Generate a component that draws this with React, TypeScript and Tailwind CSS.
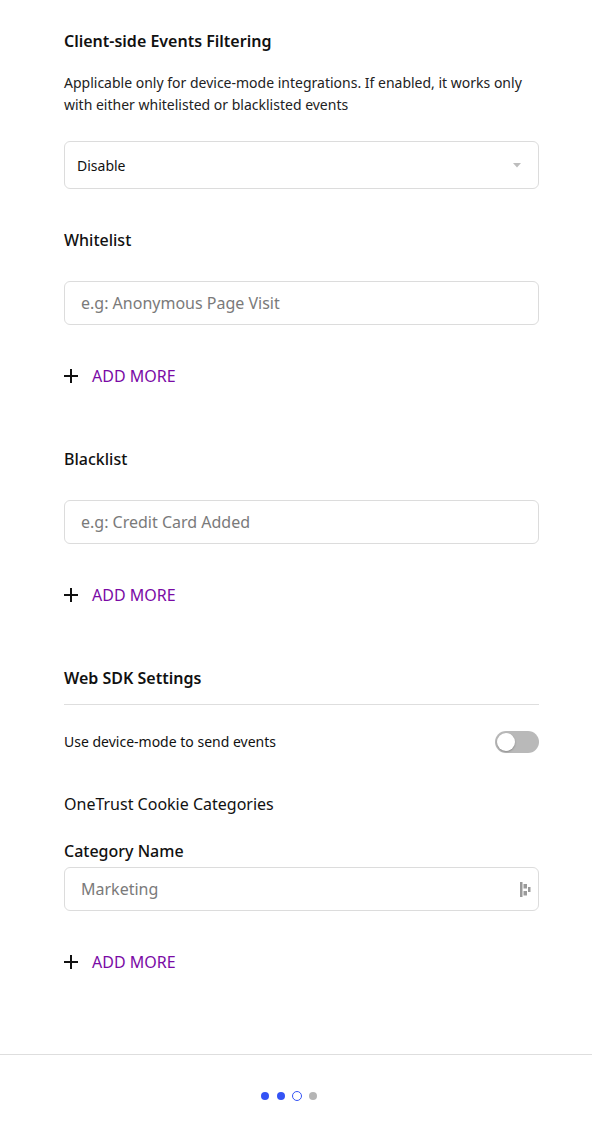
const purple = "text-[#7a0aa5]";

function AddMore({ className = "" }: { className?: string }) {
  return (
    <button className={`flex h-6 items-center gap-[14px] ${className}`}>
      <svg width="14" height="14" viewBox="0 0 14 14" className="text-[#111]">
        <path d="M7 0 V14 M0 7 H14" stroke="currentColor" strokeWidth="2" />
      </svg>
      <span className={`text-base leading-6 ${purple}`}>ADD MORE</span>
    </button>
  );
}

function TextInput({ placeholder, icon = false }: { placeholder: string; icon?: boolean }) {
  return (
    <div className="flex h-11 items-center rounded-md border border-[#dcdcdc] bg-white pl-4 pr-[7px]">
      <span className="flex-1 text-base text-[#7a7a7a]">{placeholder}</span>
      {icon && (
        <svg width="11" height="15" viewBox="0 0 11 15" className="text-[#9a9a9a]" fill="currentColor">
          <rect x="0" y="0" width="2.5" height="15" />
          <rect x="3.5" y="2" width="3.5" height="4.5" />
          <rect x="3.5" y="9" width="3.5" height="4.5" />
          <rect x="8" y="5" width="2.5" height="5" />
        </svg>
      )}
    </div>
  );
}

export default function App() {
  return (
    <div className="min-h-[1125px] bg-white font-['Noto_Sans',sans-serif] text-[#111]">
      <div className="pl-16 pr-[53px] pt-[29px]">
        <h2 className="text-base font-semibold leading-6">Client-side Events Filtering</h2>
        <p className="mt-[19px] text-sm leading-[22px] text-[#222]">
          Applicable only for device-mode integrations. If enabled, it works only with either whitelisted or
          blacklisted events
        </p>
        <div className="mt-[25px] flex h-12 items-center justify-between rounded-md border border-[#dcdcdc] pl-3 pr-[17px] pt-[2px]">
          <span className="text-sm">Disable</span>
          <svg width="8" height="5" viewBox="0 0 8 5" className="-mt-[2px]">
            <path d="M0 0 L8 0 L4 4.5 Z" fill="#bdbdbd" />
          </svg>
        </div>

        <h3 className="mt-[39px] text-base font-medium leading-6">Whitelist</h3>
        <div className="mt-[29px]">
          <TextInput placeholder="e.g: Anonymous Page Visit" />
        </div>
        <AddMore className="mt-[39px]" />

        <h3 className="mt-[59px] text-base font-medium leading-6">Blacklist</h3>
        <div className="mt-[29px]">
          <TextInput placeholder="e.g: Credit Card Added" />
        </div>
        <AddMore className="mt-[39px]" />

        <h2 className="mt-[59px] text-base font-semibold leading-6">Web SDK Settings</h2>
        <div className="mt-[14px] h-px bg-[#dedede]" />
        <div className="mt-[26px] flex h-[22px] items-center justify-between">
          <span className="text-sm">Use device-mode to send events</span>
          <div className="flex h-[22px] w-11 items-center rounded-full bg-[#b9b9b9] px-[2px]">
            <div className="h-[18px] w-[18px] rounded-full bg-white shadow-[0_1px_2px_rgba(0,0,0,0.25)]" />
          </div>
        </div>

        <h3 className="mt-[39px] text-base leading-6">OneTrust Cookie Categories</h3>
        <h4 className="mt-[23px] text-base font-medium leading-6">Category Name</h4>
        <div className="mt-1">
          <TextInput placeholder="Marketing" icon />
        </div>
        <AddMore className="mt-[39px]" />
      </div>

      <div className="mt-[80px] border-t border-[#dedede] pt-[36px] pb-[24px]">
        <div className="flex items-center justify-center gap-[6px] pr-[14px]">
          <span className="flex w-[10px] justify-center">
            <span className="h-2 w-2 rounded-full bg-[#3453f5]" />
          </span>
          <span className="flex w-[10px] justify-center">
            <span className="h-2 w-2 rounded-full bg-[#3453f5]" />
          </span>
          <span className="h-[10px] w-[10px] rounded-full border-[1.5px] border-[#3453f5]" />
          <span className="flex w-[10px] justify-center">
            <span className="h-2 w-2 rounded-full bg-[#b5b5b5]" />
          </span>
        </div>
      </div>
    </div>
  );
}
